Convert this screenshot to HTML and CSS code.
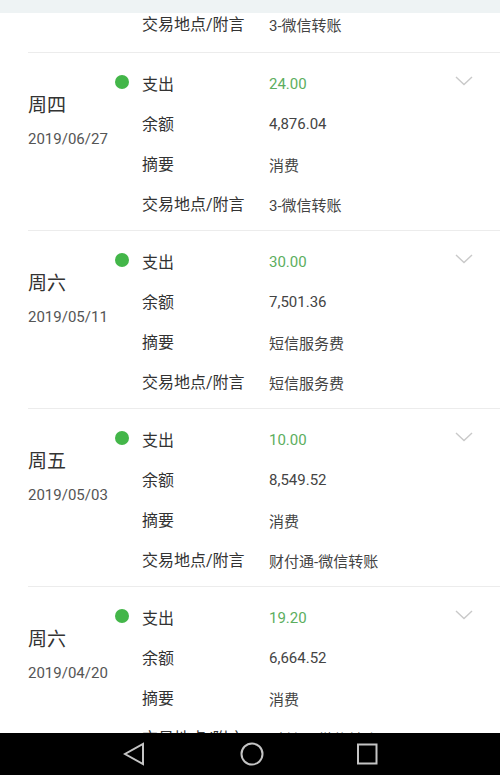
FILE: index.html
```html
<!DOCTYPE html>
<html lang="zh-CN">
<head>
  <meta charset="UTF-8" />
  <meta name="viewport" content="width=device-width, initial-scale=1" />
  <title>交易明细</title>
  <link rel="stylesheet" href="styles.css">
</head>
<body>
  <div class="screen">
    <div class="top-bar"></div>

    <div class="viewport">
      <div class="list">
        <!-- tail of the record scrolled off the top -->
        <div class="record tail">
          <div class="day"></div>
          <div class="detail">
            <div class="row"><span class="slot"></span><span class="label">交易地点/附言</span><span class="value">3-微信转账</span></div>
          </div>
        </div>

        <div class="record">
          <div class="day">
            <div class="weekday">周四</div>
            <div class="date">2019/06/27</div>
          </div>
          <div class="detail">
            <div class="row">
              <span class="dot"></span><span class="label">支出</span><span class="value green">24.00</span>
              <svg class="chevron" width="18" height="10" viewBox="0 0 18 10"><polyline points="1,1 9,8.5 17,1" /></svg>
            </div>
            <div class="row"><span class="slot"></span><span class="label">余额</span><span class="value">4,876.04</span></div>
            <div class="row"><span class="slot"></span><span class="label">摘要</span><span class="value">消费</span></div>
            <div class="row"><span class="slot"></span><span class="label">交易地点/附言</span><span class="value">3-微信转账</span></div>
          </div>
        </div>

        <div class="record">
          <div class="day">
            <div class="weekday">周六</div>
            <div class="date">2019/05/11</div>
          </div>
          <div class="detail">
            <div class="row">
              <span class="dot"></span><span class="label">支出</span><span class="value green">30.00</span>
              <svg class="chevron" width="18" height="10" viewBox="0 0 18 10"><polyline points="1,1 9,8.5 17,1" /></svg>
            </div>
            <div class="row"><span class="slot"></span><span class="label">余额</span><span class="value">7,501.36</span></div>
            <div class="row"><span class="slot"></span><span class="label">摘要</span><span class="value">短信服务费</span></div>
            <div class="row"><span class="slot"></span><span class="label">交易地点/附言</span><span class="value">短信服务费</span></div>
          </div>
        </div>

        <div class="record">
          <div class="day">
            <div class="weekday">周五</div>
            <div class="date">2019/05/03</div>
          </div>
          <div class="detail">
            <div class="row">
              <span class="dot"></span><span class="label">支出</span><span class="value green">10.00</span>
              <svg class="chevron" width="18" height="10" viewBox="0 0 18 10"><polyline points="1,1 9,8.5 17,1" /></svg>
            </div>
            <div class="row"><span class="slot"></span><span class="label">余额</span><span class="value">8,549.52</span></div>
            <div class="row"><span class="slot"></span><span class="label">摘要</span><span class="value">消费</span></div>
            <div class="row"><span class="slot"></span><span class="label">交易地点/附言</span><span class="value">财付通-微信转账</span></div>
          </div>
        </div>

        <div class="record">
          <div class="day">
            <div class="weekday">周六</div>
            <div class="date">2019/04/20</div>
          </div>
          <div class="detail">
            <div class="row">
              <span class="dot"></span><span class="label">支出</span><span class="value green">19.20</span>
              <svg class="chevron" width="18" height="10" viewBox="0 0 18 10"><polyline points="1,1 9,8.5 17,1" /></svg>
            </div>
            <div class="row"><span class="slot"></span><span class="label">余额</span><span class="value">6,664.52</span></div>
            <div class="row"><span class="slot"></span><span class="label">摘要</span><span class="value">消费</span></div>
            <div class="row"><span class="slot"></span><span class="label">交易地点/附言</span><span class="value">财付通-微信转账</span></div>
          </div>
        </div>
      </div>
    </div>

    <div class="nav-bar">
      <svg width="22" height="24" viewBox="0 0 22 24"><polygon points="20,2 20,22 2,12" /></svg>
      <svg width="24" height="24" viewBox="0 0 24 24"><circle cx="12" cy="12" r="10.5" /></svg>
      <svg class="recent" width="22" height="22" viewBox="0 0 22 22"><rect x="2" y="1.5" width="18.5" height="19" /></svg>
    </div>
  </div>
</body>
</html>
```

FILE: styles.css
```css
body {
  margin: 0;
  background: #fff;
  font-family: Roboto, "Noto Sans CJK SC", sans-serif;
  color: #333;
}
.screen {
  width: 500px;
  height: 775px;
  display: flex;
  flex-direction: column;
  overflow: hidden;
}
.top-bar {
  height: 13px;
  background: #eef3f4;
  flex-shrink: 0;
}
.viewport {
  flex: 1;
  overflow: hidden;
}
.record {
  display: flex;
  margin-left: 28px;
  padding: 10px 0 7px;
  border-bottom: 1px solid #ececec;
}
.record.tail {
  padding: 0 0 19px;
}
.record.tail .day {
  padding-top: 0;
}
.record.tail .row {
  height: 20px;
}
.day {
  width: 87px;
  padding-top: 30px;
  flex-shrink: 0;
}
.weekday {
  font-size: 19px;
  line-height: 26px;
  color: #333;
}
.date {
  margin-top: 10px;
  font-size: 15px;
  line-height: 20px;
  color: #555;
}
.detail {
  flex: 1;
}
.row {
  display: flex;
  align-items: center;
  height: 40px;
}
.dot {
  width: 14px;
  height: 14px;
  border-radius: 50%;
  background: #43b649;
  margin-right: 13px;
  margin-top: -2px;
  flex-shrink: 0;
}
.slot {
  width: 27px;
  flex-shrink: 0;
}
.label {
  width: 127px;
  font-size: 16px;
  color: #333;
  flex-shrink: 0;
}
.value {
  font-size: 15px;
  color: #444;
  padding-top: 2px;
}
.value.green {
  color: #5cae5e;
}
.chevron {
  margin-left: auto;
  margin-right: 27px;
  margin-top: -5px;
}
.chevron polyline {
  fill: none;
  stroke: #c9c9c9;
  stroke-width: 1.4;
}
.nav-bar {
  height: 42px;
  flex-shrink: 0;
  background: #000;
  display: flex;
  align-items: center;
  justify-content: center;
  gap: 95px;
}
.nav-bar .recent {
  margin-left: -3px;
}
.nav-bar svg * {
  fill: none;
  stroke: #c4c4c4;
  stroke-width: 2;
}
```
